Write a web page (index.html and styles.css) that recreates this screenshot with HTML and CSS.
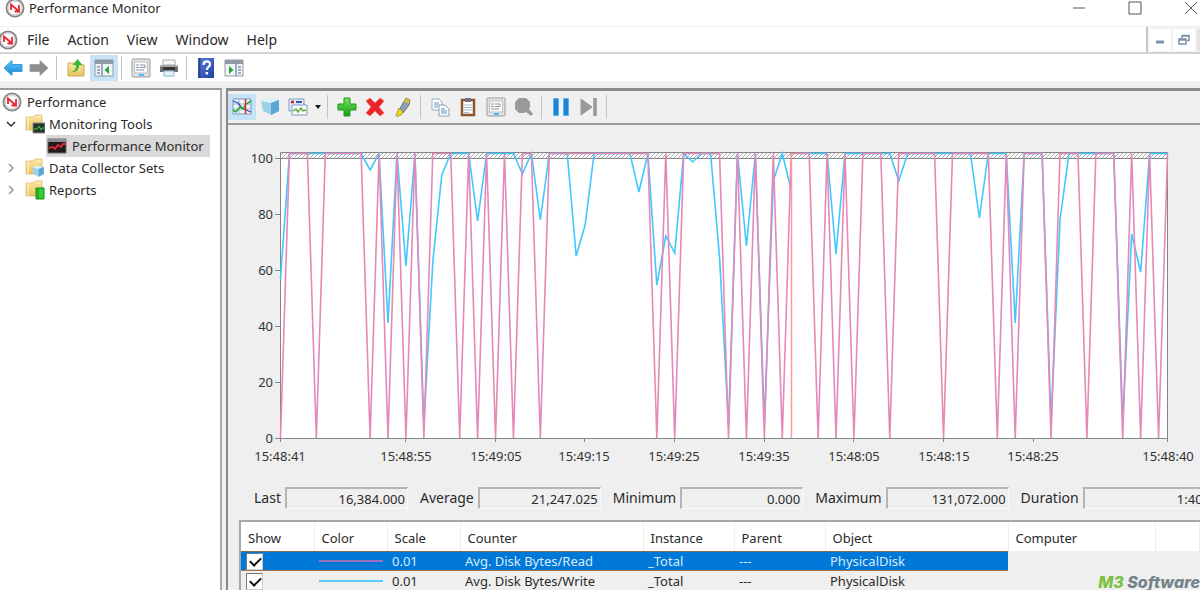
FILE: index.html
```
<!DOCTYPE html>
<html lang="en">
<head>
<meta charset="utf-8">
<title>Performance Monitor</title>
<link rel="stylesheet" href="styles.css">
</head>
<body>
<svg class="defs" aria-hidden="true">
  <defs>
    <linearGradient id="gGreen" x2="0" y2="1"><stop stop-color="#7be05a"/><stop offset="1" stop-color="#12a012"/></linearGradient>
    <linearGradient id="gBlue" x2="0" y2="1"><stop stop-color="#5cc8f8"/><stop offset="1" stop-color="#1383d8"/></linearGradient>
    <linearGradient id="gFold" x2="0" y2="1"><stop stop-color="#fbe6a6"/><stop offset="1" stop-color="#e9c35e"/></linearGradient>
    <linearGradient id="gHelp" x2="1" y2="1"><stop stop-color="#5b83dc"/><stop offset="1" stop-color="#1f3fa0"/></linearGradient>
    <pattern id="hatch" width="4" height="4" patternUnits="userSpaceOnUse"><path d="M-1 5L5-1" stroke="#a8a8a8" stroke-width="1"/></pattern>
    <symbol id="gauge" viewBox="0 0 20 20"><circle cx="10" cy="10" r="8.600" fill="#f4f4f4" stroke="#858585" stroke-width="1.800"/><circle cx="10" cy="10" r="6.800" fill="#fff" stroke="#c4c4c4" stroke-width=".8"/><path d="M6 12V6.500l7.500 6.500M14 7v6.500H9.500" fill="none" stroke="#e8252f" stroke-width="1.800"/></symbol>
    <symbol id="folder" viewBox="0 0 20 20"><path d="M1 3h7l2-2h7v15H1z" fill="url(#gFold)" stroke="#d9b65e" stroke-width=".7"/><path d="M3 3v13M12 3h4" stroke="#fff3c8" stroke-width="1.200"/></symbol>
    <symbol id="cube" viewBox="0 0 20 20"><path d="M1 4l7-3 11 2v11l-8 4-8-4z" fill="#9fd0ea"/><path d="M1 4l7-3 11 2-8 3z" fill="#dff2fb"/><path d="M11 6l8-3v11l-8 4z" fill="#5ba6d2"/></symbol>
    <symbol id="props" viewBox="0 0 20 20"><rect x="1" y="1" width="18" height="18" rx="1" fill="#e2e2e2" stroke="#9b9b9b"/><rect x="3.500" y="4" width="13" height="11" fill="#fafafa" stroke="#b0b6bc" stroke-width=".8"/><path d="M5 7h3M5 9.500h3M9 7h5v2.500H9M5 12h8" stroke="#8b98a5" fill="none"/><path d="M8 17h5" stroke="#45bdf0" stroke-width="2"/></symbol>
  </defs>
</svg>

<header class="titlebar">
  <svg class="icon"><use href="#gauge"/></svg>
  <span>Performance Monitor</span>
  <div class="window-buttons">
    <button aria-label="Minimize"><svg class="wicon" viewBox="0 0 14 14"><path d="M1 7h12"/></svg></button>
    <button aria-label="Maximize"><svg class="wicon" viewBox="0 0 14 14"><path d="M1 1h12v12H1z"/></svg></button>
    <button aria-label="Close"><svg class="wicon" viewBox="0 0 14 14"><path d="M1 1l12 12M13 1L1 13"/></svg></button>
  </div>
</header>

<nav class="menubar">
  <svg class="icon"><use href="#gauge"/></svg>
  <button>File</button><button>Action</button><button>View</button><button>Window</button><button>Help</button>
  <div class="child-buttons">
    <button aria-label="Minimize child"><svg viewBox="0 0 12 12"><path d="M2 8h8" stroke="#7e91a6" stroke-width="3"/></svg></button>
    <button aria-label="Restore child"><svg viewBox="0 0 12 12"><path d="M4 4V1.500h7v5H9M4 2h7" fill="none" stroke="#7e91a6" stroke-width="1.500"/><path d="M1 5h7v5H1zM1 6h7" fill="#fff" stroke="#7e91a6" stroke-width="1.500"/></svg></button>
    <span class="child-edge"></span>
  </div>
</nav>

<div class="toolbar">
  <button class="narrow" aria-label="Back"><svg viewBox="0 0 20 20"><path d="M1 10l8-7.500V6.500h10v7H9v4z" fill="url(#gBlue)" stroke="#3c9ad4"/></svg></button>
  <button aria-label="Forward"><svg viewBox="0 0 20 20"><path d="M19 10l-8-7.500V6.500H1v7h10v4z" fill="#8d8d8d" stroke="#a3a3a3"/></svg></button>
  <span class="sep"></span>
  <button aria-label="Up one level"><svg viewBox="0 0 20 20"><path d="M2 5h6l2 2h8v11H2z" fill="url(#gFold)" stroke="#d0aa4c"/><path d="M4 14c5 0 6-3 6-7H6.500L11.500 1l5 6H13c0 5-3 8-9 7z" fill="#3cb838"/></svg></button>
  <button class="active" aria-label="Show console tree"><svg viewBox="0 0 20 20"><path d="M1 2h18v16H1z" fill="#f1f4f6" stroke="#8e9aa5"/><path d="M1 2h18v4H1z" fill="#8e9aa6"/><path d="M8 6v12M3 9h3M3 12h3M3 15h3" stroke="#8297b0" stroke-width="1.500"/><path d="M15 8v8l-4.500-4z" fill="#25a82b"/></svg></button>
  <span class="sep"></span>
  <button aria-label="Properties"><svg><use href="#props"/></svg></button>
  <button aria-label="Print"><svg viewBox="0 0 20 20"><path d="M4 2h12v5H4z" fill="#f7f7f7" stroke="#aaa"/><path d="M1 7h18v7H1z" fill="#6b6e72"/><path d="M1 7h18v2H1z" fill="#a5a8ab"/><path d="M4 9h12v3H4z" fill="#333"/><path d="M5 13h10v5H5z" fill="#e3f2fb" stroke="#8bb5d0"/></svg></button>
  <span class="sep"></span>
  <button aria-label="Help"><svg viewBox="0 0 20 20"><path d="M2 0h16v20H2z" fill="url(#gHelp)"/><path d="M3.500 0v20" stroke="#27438f" stroke-width="2"/><path d="M7.500 7c0-5 7-4.500 6.500-.5-.3 2.500-3.200 2.700-3.200 5.500" fill="none" stroke="#fff" stroke-width="2.200"/><path d="M9.600 14h2.500v2.500H9.600z" fill="#fff"/></svg></button>
  <button aria-label="Show action pane"><svg viewBox="0 0 20 20"><path d="M1 2h18v16H1z" fill="#f1f4f6" stroke="#8e9aa5"/><path d="M1 2h18v4H1z" fill="#8e9aa6"/><path d="M12 6v12M14 9h3M14 12h3M14 15h3" stroke="#8297b0" stroke-width="1.500"/><path d="M5 8v8l4.500-4z" fill="#25a82b"/></svg></button>
</div>

<main class="workspace">
  <aside class="sidebar">
    <ul class="tree">
      <li><svg class="icon"><use href="#gauge"/></svg><span class="node">Performance</span></li>
      <li class="level1"><svg class="chevron open" viewBox="0 0 10 10"><path d="M1 3l4 4 4-4"/></svg><svg class="icon" viewBox="0 0 20 20"><use href="#folder"/><path d="M8 9h12v10H8z" fill="#28352b" stroke="#888"/><path d="M9 15h3l2-3 2 4 1-2h2" fill="none" stroke="#36d444"/></svg><span class="node">Monitoring Tools</span></li>
      <li class="level2 selected"><svg class="icon" viewBox="0 0 20 20"><path d="M1 3h18v14H1z" fill="#241a1c" stroke="#666"/><path d="M1 3h18v3H1z" fill="#8c9096"/><path d="M2 12l4-1 2 2 3-4 3 2 2-3h3" fill="none" stroke="#e22c35" stroke-width="1.800"/></svg><span class="node">Performance Monitor</span></li>
      <li class="level1"><svg class="chevron" viewBox="0 0 10 10"><path d="M3 1l4 4-4 4"/></svg><svg class="icon" viewBox="0 0 20 20"><use href="#folder"/><use href="#cube" x="6" y="7" width="14" height="13"/></svg><span class="node">Data Collector Sets</span></li>
      <li class="level1"><svg class="chevron" viewBox="0 0 10 10"><path d="M3 1l4 4-4 4"/></svg><svg class="icon" viewBox="0 0 20 20"><use href="#folder"/><path d="M11 8h8v11h-8z" fill="#35cd33" stroke="#128a18"/><path d="M13 8v11" stroke="#138b1c"/></svg><span class="node">Reports</span></li>
    </ul>
  </aside>

  <section class="monitor">
    <div class="toolbar monitor-bar">
      <button class="active" aria-label="View current activity"><svg viewBox="0 0 20 20"><path d="M1 2h18v15H1z" fill="#eef4fa" stroke="#7d97bd"/><path d="M1 7h18M1 12h18M7 2v15" stroke="#9fb4d0"/><path d="M1 4l5 2 4 5 4 2 5 2" fill="none" stroke="#2b50b8" stroke-width="1.300"/><path d="M1 13l3 2 4-5 3 2 3-5 5-3" fill="none" stroke="#2daa35" stroke-width="1.600"/><path d="M13.500 2v15" stroke="#e2252b" stroke-width="1.500"/></svg></button>
      <button aria-label="View log data"><svg><use href="#cube"/></svg></button>
      <button aria-label="Change graph type"><svg viewBox="0 0 20 20"><path d="M1 2h15v12H1z" fill="#dfe9f8" stroke="#8197c9"/><path d="M3 5h3" stroke="#d3202b" stroke-width="2.500"/><path d="M8 5h6" stroke="#4055b0" stroke-width="2"/><path d="M4 8h15v10H4z" fill="#f8fbf6" stroke="#8197c9"/><path d="M5 14l3-2 2 3 3-4 2 3 3-1" fill="none" stroke="#62ad3f" stroke-width="1.400"/></svg></button>
      <button class="caret" aria-label="Graph types"><svg viewBox="0 0 8 8"><path d="M1 2h6L4 6z" fill="#111"/></svg></button>
      <span class="sep"></span>
      <button aria-label="Add"><svg viewBox="0 0 20 20"><path d="M7 1h6v6h6v6h-6v6H7v-6H1V7h6z" fill="url(#gGreen)" stroke="#1b9a20"/></svg></button>
      <button aria-label="Delete"><svg viewBox="0 0 20 20"><path d="M1 4l4-3 5 5 5-5 4 3-5 6 5 6-4 3-5-5-5 5-4-3 5-6z" fill="#ea2427" stroke="#f16c62" stroke-width=".7"/></svg></button>
      <button aria-label="Highlight"><svg viewBox="0 0 20 20"><path d="M13 1l4 2-1 5-6 8-4-3z" fill="#8aa2b4" stroke="#4d5c69" stroke-width=".8"/><path d="M13 1l4 2-1.500 4-4.500-3z" fill="#e2b92e"/><path d="M6 11l4 4-2 3-4 1.500-1-1z" fill="#eadc1c" stroke="#8b8018" stroke-width=".7"/></svg></button>
      <span class="sep"></span>
      <button aria-label="Copy properties"><svg viewBox="0 0 20 20"><path d="M2 2h7l3 3v8H2z" fill="#fff" stroke="#9cabb9"/><path d="M4 6h5M4 8h5M4 10h4" stroke="#7299c0"/><path d="M9 8h6l4 4v7H9z" fill="#fff" stroke="#8c9cac"/><path d="M11 12h4M11 14h6M11 16h6" stroke="#4c92cc"/></svg></button>
      <button aria-label="Paste counter list"><svg viewBox="0 0 20 20"><path d="M4 3h12v15H4z" fill="#fff" stroke="#8a5630" stroke-width="2.500"/><path d="M7 1h6v4H7z" fill="#6e7278"/><path d="M6 8h8M6 10.500h8M6 13h8M6 15.500h5" stroke="#a6b5c5"/></svg></button>
      <button aria-label="Properties"><svg><use href="#props"/></svg></button>
      <button aria-label="Zoom"><svg viewBox="0 0 20 20"><path d="M5 1h7l4 4v5l-1 2 4 5-2 2-5-4-2 1H5l-4-4V5z" fill="#999"/></svg></button>
      <span class="sep"></span>
      <button aria-label="Freeze display"><svg viewBox="0 0 20 20"><path d="M2.500 1.500h5v17h-5zM12.500 1.500h5v17h-5z" fill="#1d84d2" stroke="#58b4ec"/></svg></button>
      <button aria-label="Update data"><svg viewBox="0 0 20 20"><path d="M2 2l11 8-11 8z" fill="#999" stroke="#999"/><path d="M16 1v18" stroke="#999" stroke-width="3.500"/></svg></button>
      <span class="sep"></span>
    </div>

    <svg class="chart" viewBox="228 125 972 352" role="img" aria-label="Disk counters over time">
      <path d="M280 152h887v286H280z" fill="#fff"/>
      <path d="M280 153h887v5H280z" fill="url(#hatch)"/>
      <path d="M280.500 438V152.500H1167.500V438M275 158.500H1167M275 438.500H1168M275 214.500h6M275 270.500h6M275 326.500h6M275 382.500h6M280.500 438v4M405.500 438v4M495.500 438v4M584.500 438v4M674.500 438v4M764.500 438v4M853.500 438v4M943.500 438v4M1033.500 438v4M1167.500 438v4" class="axis"/>
      <g transform="translate(280.500 0) scale(8.960 1)">
        <polyline class="line-write" points="0,279 1,153.500 9,153.500 10,170 11,153.500 12,323 13,153.500 14,266 15,153.500 16,425 17,262 18,175 19,153.500 21,153.500 22,221 23,153.500 26,153.500 27,174 28,153.500 29,220 30,153.500 32,153.500 33,256 34,225 35,153.500 39,153.500 40,192 41,153.500 42,285 43,236 44,253 45,153.500 46,162 47,153.500 48,153.500 49,257 50,425 51,153.500 52,246 53,153.500 54,422 55,181 56,153.500 57,190"/>
        <polyline class="line-write" points="58,153.500 61,153.500 62,254 63,153.500 68,153.500 69,181 70,153.500 77,153.500 78,218 79,153.500 81,153.500 82,323 83,153.500 85,153.500 86,422 87,220 88,153.500 93,153.500 94,422 95,234 96,272 97,153.500 99,153.500"/>
        <polyline class="line-read" points="0,438 1,153.500 3,153.500 4,438 5,153.500 9,153.500 10,438 11,153.500 12,438 13,153.500 14,438 15,153.500 16,438 17,153.500 19,153.500 20,438 21,153.500 22,438 23,153.500 24,438 25,153.500 26,438 27,153.500 28,153.500 29,438 30,153.500 41,153.500 42,438 43,153.500 44,438 45,153.500 49,153.500 50,438 51,153.500 52,438 53,153.500 54,438 55,153.500 56,438 57,153.500"/>
        <polyline class="line-read" points="57,153.500 59,153.500 60,438 61,153.500 62,438 63,153.500 64,438 65,153.500 67,153.500 68,438 69,153.500 73,153.500 74,438 75,153.500 79,153.500 80,438 81,153.500 82,438 83,153.500 85,153.500 86,438 87,153.500 89,153.500 90,438 91,153.500 93,153.500 94,438 95,153.500 96,438 97,153.500 98,438 99,153.500"/>
      </g>
      <path d="M791.500 153V438" class="cursor"/>
      <g class="ylabels"><text x="273" y="163">100</text><text x="273" y="219">80</text><text x="273" y="275">60</text><text x="273" y="331">40</text><text x="273" y="387">20</text><text x="273" y="443">0</text></g>
      <g class="xlabels"><text x="280" y="461">15:48:41</text><text x="406" y="461">15:48:55</text><text x="496" y="461">15:49:05</text><text x="584" y="461">15:49:15</text><text x="674" y="461">15:49:25</text><text x="764" y="461">15:49:35</text><text x="854" y="461">15:48:05</text><text x="944" y="461">15:48:15</text><text x="1033" y="461">15:48:25</text><text x="1168" y="461">15:48:40</text></g>
    </svg>

    <div class="stats">
      <label for="last">Last</label><input id="last" readonly value="16,384.000">
      <label for="avg">Average</label><input id="avg" readonly value="21,247.025">
      <label for="min">Minimum</label><input id="min" readonly value="0.000">
      <label for="max">Maximum</label><input id="max" readonly value="131,072.000">
      <label for="dur">Duration</label><input id="dur" readonly value="1:40">
    </div>

    <div class="legend">
      <table>
        <colgroup><col class="c-sm"><col class="c-sm"><col class="c-sm"><col class="c-lg"><col class="c-md"><col class="c-md"><col class="c-lg"><col class="c-host"><col></colgroup>
        <thead><tr><th>Show</th><th>Color</th><th>Scale</th><th>Counter</th><th>Instance</th><th>Parent</th><th>Object</th><th>Computer</th><th></th></tr></thead>
        <tbody>
          <tr class="picked"><td><input type="checkbox" checked aria-label="Show Avg. Disk Bytes/Read"></td><td><span class="swatch read"></span></td><td>0.01</td><td>Avg. Disk Bytes/Read</td><td>_Total</td><td>---</td><td>PhysicalDisk</td><td></td><td></td></tr>
          <tr><td><input type="checkbox" checked aria-label="Show Avg. Disk Bytes/Write"></td><td><span class="swatch write"></span></td><td>0.01</td><td>Avg. Disk Bytes/Write</td><td>_Total</td><td>---</td><td>PhysicalDisk</td><td></td><td></td></tr>
        </tbody>
      </table>
    </div>
  </section>
</main>
<div class="brand"><span>M3</span> Software</div>
</body>
</html>
```
FILE: styles.css
```
* { box-sizing: border-box; }
body {
  margin: 0;
  height: 100vh;
  display: flex;
  flex-direction: column;
  position: relative;
  overflow: hidden;
  background: #efefef;
  color: #2a2a2a;
  font: 13px/20px "Noto Sans", "Open Sans", sans-serif;
}
button { border: 0; padding: 0; background: none; font: inherit; color: inherit; }
svg { display: block; }
.defs { position: absolute; width: 0; height: 0; }
.icon { width: 20px; height: 20px; flex: none; }

.titlebar { display: flex; align-items: center; height: 26px; padding: 0 0 10px 5px; gap: 4px; background: #fff; flex: none; }
.window-buttons { margin-left: auto; display: flex; gap: 42px; margin-right: 2px; }
.wicon { width: 14px; height: 14px; fill: none; stroke: #555; }

.menubar { display: flex; align-items: center; height: 28px; flex: none; background: #fff; border-top: 1px solid #eee; border-bottom: 2px solid #d4d4d4; gap: 18px; font-size: 14px; }
.menubar > .icon { margin: 0 -9px 0 -2px; }
.child-buttons { margin-left: auto; align-self: stretch; display: flex; align-items: center; gap: 2px; border-left: 2px solid #c8c8c8; background: #f2f2f2; padding-left: 1px; }
.child-buttons button { width: 22px; height: 22px; background: #fff; display: grid; place-items: center; }
.child-buttons svg { width: 12px; height: 12px; }
.child-edge { width: 3px; height: 22px; background: #e3e3e3; }

.toolbar { display: flex; align-items: center; height: 27px; flex: none; background: #fff; }
.toolbar button { width: 28px; height: 26px; display: grid; place-items: center; flex: none; }
.toolbar svg { width: 20px; height: 20px; }
.toolbar .narrow { width: 25px; }
.toolbar .active { background: #c5e2f7; }
.sep { width: 1px; height: 24px; margin: 0 5px 0 3px; background: #c4c4c4; flex: none; }

.workspace { flex: 1; min-height: 0; display: flex; gap: 4px; padding-top: 7px; }
.sidebar { width: 222px; flex: none; background: #fff; border-top: 2px solid #9a9aa0; border-right: 2px solid #a8a8ae; }
.tree { list-style: none; margin: 0; padding: 1px 0; }
.tree li { display: flex; align-items: center; height: 22px; gap: 5px; padding-left: 2px; }
.tree .level1 { padding-left: 6px; gap: 4px; }
.tree .level1 .icon { margin-left: 5px; }
.tree .level2 { margin-left: 46px; margin-right: 10px; padding-left: 1px; }
.tree .selected { background: #d9d9d9; }
.node { white-space: nowrap; }
.chevron { width: 10px; height: 10px; fill: none; stroke: #999; stroke-width: 1.5; }
.chevron.open { stroke: #333; }

.monitor { flex: 1; min-width: 0; display: flex; flex-direction: column; border-top: 3px solid #8a8a8a; border-left: 2px solid #8a8a8a; }
.monitor-bar { height: 34px; background: #f0f0f0; border-bottom: 2px solid #9c9c9c; }
.monitor-bar .caret { width: 12px; }
.monitor-bar .caret svg { width: 8px; height: 8px; }

.chart { width: 100%; flex: none; }
.axis { fill: none; stroke: #858585; }
.line-read, .line-write { fill: none; vector-effect: non-scaling-stroke; stroke-width: 1.6px; }
.line-read { stroke: #e589b8; }
.line-write { stroke: #40c8ff; }
.cursor { stroke: #f99; stroke-width: 1.5px; }
.chart text { font-size: 13px; fill: #333; }
.ylabels { text-anchor: end; }
.xlabels { text-anchor: middle; }

.stats { display: flex; align-items: center; flex: none; padding: 10px 0 0 26px; }
.stats label { margin-right: 4px; white-space: nowrap; font-size: 14px; }
.stats input { width: 123px; height: 22px; flex: none; margin-right: 12px; padding: 0 2px; border: 1px solid #fafafa; border-top: 2px solid #b5b5b5; border-left: 2px solid #b5b5b5; border-radius: 0; background: #efefef; color: inherit; font: inherit; text-align: right; }

.legend { margin: 11px 0 0 11px; border-top: 2px solid #a6a6ae; border-left: 2px solid #a6a6ae; flex: 1; }
.legend table { width: 100%; table-layout: fixed; border-collapse: collapse; }
.c-sm { width: 73px; }
.c-md { width: 91px; }
.c-lg { width: 183px; }
.c-host { width: 147px; }
.legend th { height: 29px; padding: 3px 0 0 7px; text-align: left; font-weight: 400; background: #fff; border-right: 1px solid #eee; }
.legend td { height: 20px; padding: 0 0 0 5px; line-height: 19px; white-space: nowrap; }
.picked td:nth-child(-n+7) { background: #0078d7; color: #d8ecff; box-shadow: inset 0 1px #7b6b55, inset 0 -1px #a8754a; }
.legend input { appearance: none; display: block; width: 17px; height: 17px; margin: 0; background: #fff; border: 1px solid #ccc; border-top-color: #777; border-left-color: #777; }
.legend input:checked::before { content: ""; display: block; width: 5px; height: 9px; margin: 1px 0 0 5px; border: solid #111; border-width: 0 2px 2px 0; transform: rotate(45deg); }
.swatch { display: block; width: 64px; height: 2px; }
.read { background: #9a70b8; }
.write { background: #5bcdfb; }

.brand { position: absolute; right: 0; bottom: -3px; white-space: nowrap; font: italic 800 16px/22px Inter, sans-serif; color: #74838a; }
.brand span { color: #7cc142; }
```
